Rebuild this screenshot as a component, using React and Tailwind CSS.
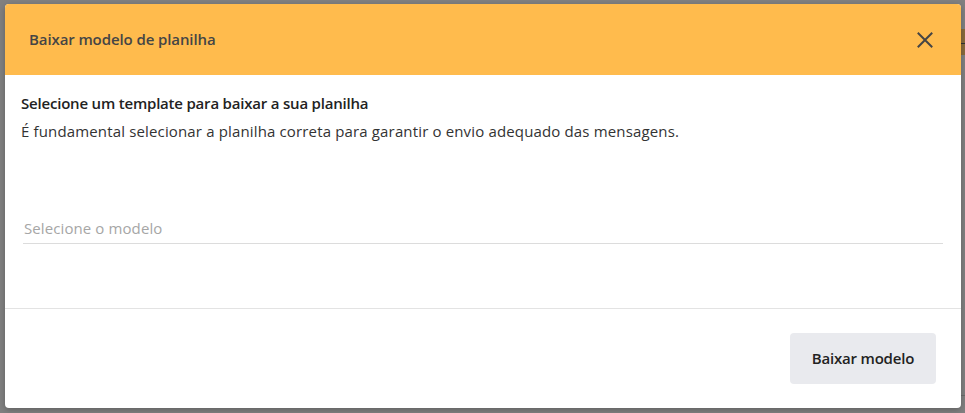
import React from 'react';

const CloseIcon = () => (
  <svg width="16" height="16" viewBox="0 0 16 16" fill="none">
    <path d="M1.5 1.5L14.5 14.5M14.5 1.5L1.5 14.5" stroke="#454545" strokeWidth="2" strokeLinecap="square" />
  </svg>
);

const App = () => {
  return (
    <div className="relative w-full h-[413px] bg-[#808080] overflow-hidden font-['Open_Sans',sans-serif]">
      {/* page behind the backdrop, peeking out on the right */}
      <div className="absolute right-0 top-[29px] w-[4px] h-[26px] bg-[#8a6a3c]" />
      <div className="absolute right-0 top-[43px] w-[4px] h-px bg-[#333]" />
      <div className="absolute right-0 top-[395px] w-[4px] h-px bg-[#6a6a6a]" />

      <div className="relative ml-[5px] pt-[4px]">
        <div className="w-[956px] h-[404px] bg-white rounded-[4px] flex flex-col overflow-hidden shadow-[0_2px_6px_rgba(0,0,0,0.25)]">
          <header className="h-[71px] shrink-0 bg-[#ffbb4d] flex items-center justify-between pl-[24px] pr-[28px]">
            <h2 className="text-[15px] font-semibold text-[#454545] tracking-[-0.1px]">Baixar modelo de planilha</h2>
            <button className="p-0 flex items-center justify-center">
              <CloseIcon />
            </button>
          </header>

          <div className="flex-1 px-[16px] pt-[18px] border-b border-[#e3e3e3]">
            <h3 className="text-[15px] leading-[20px] font-semibold text-[#222] tracking-[-0.2px]">Selecione um template para baixar a sua planilha</h3>
            <p className="mt-[8px] text-[15px] leading-[20px] text-[#333] tracking-[0.15px]">
              É fundamental selecionar a planilha correta para garantir o envio adequado das mensagens.
            </p>
            <div className="mt-[72px] mx-[2px] h-[31px] border-b border-[#dcdcdc] flex items-center">
              <span className="text-[15px] text-[#a6a6a6] pl-px tracking-[0.1px]">Selecione o modelo</span>
            </div>
          </div>

          <footer className="h-[99px] shrink-0 flex items-center justify-end pr-[25px]">
            <button className="w-[146px] h-[51px] rounded-[4px] bg-[#e9eaee] text-[15px] font-semibold text-[#222] tracking-[-0.2px]">
              Baixar modelo
            </button>
          </footer>
        </div>
      </div>
    </div>
  );
};

export default App;
